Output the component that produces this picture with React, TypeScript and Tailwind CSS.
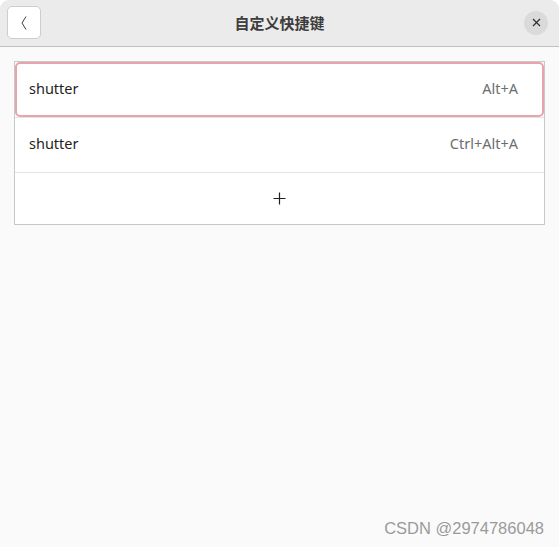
const rows = [
  { name: 'shutter', keys: 'Alt+A', focused: true },
  { name: 'shutter', keys: 'Ctrl+Alt+A', focused: false },
];

const App = () => {
  return (
    <div className="w-[559px] h-[547px] bg-white">
      <div
        className="flex flex-col w-full h-full rounded-t-[9px] overflow-hidden bg-[#fafafa]"
        style={{ fontFamily: '"Noto Sans", "Noto Sans CJK SC", sans-serif' }}
      >
        {/* Header bar */}
        <div className="relative flex items-center justify-between h-[47px] px-[7px] bg-[#ebebeb] border-b border-[#c0c0c0]">
          <button className="flex items-center justify-center w-[34px] h-[33px] mb-[1px] bg-white border border-[#cdcdcd] rounded-[5px]">
            <svg width="10" height="16" viewBox="0 0 10 16" fill="none">
              <path d="M7 1.5 L3 8 L7 14.5" stroke="#3d3d3d" strokeWidth="1" />
            </svg>
          </button>
          <h1 className="absolute left-1/2 -translate-x-1/2 text-[15px] font-bold text-[#3d3d3d]">
            自定义快捷键
          </h1>
          <button className="flex items-center justify-center w-[24px] h-[24px] mr-[4px] mb-[1px] rounded-full bg-[#dadada]">
            <svg width="9" height="9" viewBox="0 0 9 9" fill="none">
              <path d="M1 1 L8 8 M8 1 L1 8" stroke="#333" strokeWidth="1.3" />
            </svg>
          </button>
        </div>

        {/* Shortcut list */}
        <div className="px-[14px] pt-[14px]">
          <div className="bg-white border border-[#c8c8c8]">
            {rows.map((row, i) => (
              <div
                key={i}
                className={
                  row.focused
                    ? 'flex items-center justify-between h-[55px] pl-[12px] pr-[24px] pb-[2px] text-[14.5px] border-2 border-[#e8a3ad] rounded-[5px]'
                    : 'flex items-center justify-between h-[55px] pl-[14px] pr-[26px] pb-[2px] text-[14.5px] border-t border-[#e3e3e3]'
                }
              >
                <span className="text-[#1f1f1f]">{row.name}</span>
                <span className="text-[#6e6e6e]">{row.keys}</span>
              </div>
            ))}
            <div className="flex items-center justify-center h-[52px] border-t border-[#e3e3e3]">
              <svg width="13" height="13" viewBox="0 0 13 13" fill="none">
                <path d="M6.5 0.5 V12.5 M0.5 6.5 H12.5" stroke="#1f1f1f" strokeWidth="1.2" />
              </svg>
            </div>
          </div>
        </div>

        {/* Watermark */}
        <div className="mt-auto flex justify-end pr-[15px] pb-[6px]">
          <span
            className="text-[16.5px] text-[#9a9a9a]"
            style={{ fontFamily: '"Liberation Sans", Arial, sans-serif' }}
          >
            CSDN @2974786048
          </span>
        </div>
      </div>
    </div>
  );
};

export default App;
